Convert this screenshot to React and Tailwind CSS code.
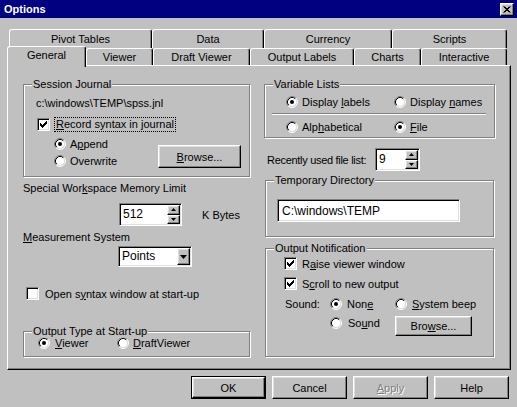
const raised =
  "bg-[#c0c0c0] border border-t-white border-l-white border-r-black border-b-black shadow-[inset_-1px_-1px_0_#808080,inset_1px_1px_0_#dfdfdf]";
const sunken =
  "bg-white border border-t-[#808080] border-l-[#808080] border-r-white border-b-white shadow-[inset_1px_1px_0_#000,inset_-1px_-1px_0_#dfdfdf]";

function Radio({ checked }) {
  return (
    <svg width="12" height="12" viewBox="0 0 12 12" className="shrink-0">
      <circle cx="6" cy="6" r="4.5" fill="#fff" />
      <path d="M2.11 9.89A5.5 5.5 0 0 1 9.89 2.11" fill="none" stroke="#808080" />
      <path d="M9.89 2.11A5.5 5.5 0 0 1 2.11 9.89" fill="none" stroke="#fff" />
      <path d="M2.82 9.18A4.5 4.5 0 0 1 9.18 2.82" fill="none" stroke="#000" />
      <path d="M9.18 2.82A4.5 4.5 0 0 1 2.82 9.18" fill="none" stroke="#dfdfdf" />
      {checked && <circle cx="6" cy="6" r="2" fill="#000" />}
    </svg>
  );
}

const tick = [
  [6, 0, 1], [5, 1, 2], [0, 2, 1], [4, 2, 3], [0, 3, 2], [3, 3, 3], [0, 4, 5], [1, 5, 3], [2, 6, 1],
];

function Check({ checked }) {
  return (
    <span className={`w-[13px] h-[13px] shrink-0 flex items-center justify-center ${sunken}`}>
      {checked && (
        <svg width="7" height="7" viewBox="0 0 7 7">
          {tick.map(([x, y, w], i) => (
            <rect key={i} x={x} y={y} width={w} height="1" fill="#000" />
          ))}
        </svg>
      )}
    </span>
  );
}

function Opt({ checked, children, className = "", gap = "gap-[4px]" }) {
  return (
    <div className={`flex items-center ${gap} ${className}`}>
      <Radio checked={checked} />
      <span>{children}</span>
    </div>
  );
}

function Btn({ className = "", children }) {
  return <div className={`flex items-center justify-center ${raised} ${className}`}>{children}</div>;
}

function Arrow({ up }) {
  return (
    <svg width="5" height="3" viewBox="0 0 5 3">
      <polygon points={up ? "2.5,0 5,3 0,3" : "0,0 5,0 2.5,3"} fill="#000" />
    </svg>
  );
}

function Spin({ value, className = "" }) {
  return (
    <div className={`flex p-[1px] ${sunken} ${className}`}>
      <span className="flex-1 pl-[2px] leading-[18px] text-[12px]">{value}</span>
      <div className="flex flex-col w-[13px]">
        <Btn className="flex-1">
          <Arrow up />
        </Btn>
        <Btn className="flex-1">
          <Arrow />
        </Btn>
      </div>
    </div>
  );
}

function Group({ title, className = "", children }) {
  return (
    <div className={`relative border border-[#808080] shadow-[1px_1px_0_#fff,inset_1px_1px_0_#fff] ${className}`}>
      <span className="absolute -top-[8px] left-[8px] bg-[#c0c0c0] px-[1px] leading-[14px]">{title}</span>
      {children}
    </div>
  );
}

function Tab({ w, children }) {
  return (
    <div
      className={`${w} h-full flex items-center justify-center border-t border-l border-r border-t-white border-l-white border-r-black rounded-t-[3px] shadow-[inset_-1px_0_0_#808080]`}
    >
      {children}
    </div>
  );
}

export default function App() {
  return (
    <div className="w-[517px] h-[407px] overflow-hidden bg-[#c0c0c0] text-black text-[11px] leading-[14px] font-['Liberation_Sans',Arial,sans-serif]">
      <div className="h-[18px] bg-[#000080] flex items-center justify-between pl-[4px] pr-[3px]">
        <span className="text-white font-bold text-[11px]">Options</span>
        <Btn className="w-[14px] h-[13px]">
          <svg width="8" height="7" viewBox="0 0 8 7">
            <path d="M0.5 0.5L6.5 6.5M1.5 0.5L7.5 6.5M6.5 0.5L0.5 6.5M7.5 0.5L1.5 6.5" stroke="#000" strokeWidth="1" />
          </svg>
        </Btn>
      </div>

      <div className="mt-[11px] h-[19px] flex pl-[9px]">
        <Tab w="w-[143px]">Pivot Tables</Tab>
        <Tab w="w-[112px]">Data</Tab>
        <Tab w="w-[128px]">Currency</Tab>
        <Tab w="w-[115px]">Scripts</Tab>
      </div>
      <div className="h-[17px] flex pl-[7px]">
        <div className="relative z-10 w-[79px] h-[21px] -mt-[2px] -mb-[2px] bg-[#c0c0c0] flex justify-center pt-[1px] border-t border-l border-r border-t-white border-l-white border-r-black rounded-t-[3px] shadow-[inset_-1px_0_0_#808080]">
          General
        </div>
        <Tab w="w-[67px]">Viewer</Tab>
        <Tab w="w-[97px]">Draft Viewer</Tab>
        <Tab w="w-[104px]">Output Labels</Tab>
        <Tab w="w-[67px]">Charts</Tab>
        <Tab w="w-[86px]">Interactive</Tab>
      </div>

      <div className="ml-[7px] w-[504px] h-[305px] border border-t-white border-l-white border-r-black border-b-black shadow-[inset_-1px_-1px_0_#808080] flex pl-[15px] pt-[18px]">
        {/* left column */}
        <div className="w-[228px] flex flex-col">
          <Group title="Session Journal" className="w-[227px] h-[93px] pl-[12px] pt-[11px]">
            <div className="h-[14px]">c:\windows\TEMP\spss.jnl</div>
            <div className="flex items-center h-[15px] mt-[7px] ml-[1px] gap-[4px]">
              <Check checked />
              <span className="border border-dotted border-black px-[1px] leading-[13px]">
                <u>R</u>ecord syntax in journal
              </span>
            </div>
            <div className="flex">
              <div className="flex flex-col ml-[18px] mt-[3px]">
                <Opt checked className="h-[17px]">
                  A<u>p</u>pend
                </Opt>
                <Opt className="h-[17px]">Overwrite</Opt>
              </div>
              <Btn className="ml-auto mr-[8px] mt-[13px] w-[83px] h-[23px]">
                <u>B</u>rowse...
              </Btn>
            </div>
          </Group>

          <div className="mt-[4px] h-[14px]">
            Special Wor<u>k</u>space Memory Limit
          </div>
          <div className="mt-[8px] flex items-center">
            <Spin value="512" className="ml-[96px] w-[63px] h-[23px]" />
            <span className="ml-[20px]">K Bytes</span>
          </div>
          <div className="mt-[4px] h-[14px]">
            <u>M</u>easurement System
          </div>
          <div className={`mt-[2px] ml-[95px] w-[74px] h-[21px] flex p-[1px] ${sunken}`}>
            <span className="flex-1 pl-[2px] leading-[17px] text-[12px]">Points</span>
            <Btn className="w-[13px]">
              <svg width="7" height="4" viewBox="0 0 7 4">
                <polygon points="0,0 7,0 3.5,4" fill="#000" />
              </svg>
            </Btn>
          </div>
          <div className="mt-[19px] h-[15px] flex items-center gap-[6px] pl-[3px]">
            <Check />
            <span>
              Open s<u>y</u>ntax window at start-up
            </span>
          </div>
          <Group title="Output Type at Start-up" className="mt-[30px] w-[227px] h-[26px] pt-[4px] pl-[14px]">
            <div className="flex items-center h-[14px]">
              <Opt checked gap="gap-[5px]" className="w-[79px]">
                <u>V</u>iewer
              </Opt>
              <Opt>
                <u>D</u>raftViewer
              </Opt>
            </div>
          </Group>
        </div>

        {/* right column */}
        <div className="ml-[13px] w-[232px] flex flex-col">
          <Group title="Variable Lists" className="w-[231px] h-[54px] pt-[9px]">
            <div className="flex h-[16px] items-center pl-[21px]">
              <Opt checked className="w-[108px]">
                Display <u>l</u>abels
              </Opt>
              <Opt>
                Display <u>n</u>ames
              </Opt>
            </div>
            <div className="mt-[3px] ml-[7px] w-[214px] border-t border-b border-t-[#808080] border-b-white" />
            <div className="mt-[4px] flex h-[16px] items-center pl-[21px]">
              <Opt className="w-[108px]">
                Alp<u>h</u>abetical
              </Opt>
              <Opt checked>
                <u>F</u>ile
              </Opt>
            </div>
          </Group>

          <div className="mt-[10px] h-[23px] flex items-center pl-[3px]">
            <span className="w-[108px] tracking-[-0.3px]">Recently used file list:</span>
            <Spin value="9" className="w-[45px] h-[23px]" />
          </div>

          <Group title="Temporary Directory" className="mt-[9px] ml-[1px] w-[229px] h-[57px] pt-[18px] pl-[11px]">
            <div className={`w-[183px] h-[23px] flex items-center pl-[4px] text-[12px] ${sunken}`}>C:\windows\TEMP</div>
          </Group>

          <Group title="Output Notification" className="mt-[11px] ml-[1px] w-[229px] h-[109px] pt-[7px]">
            <div className="flex items-center h-[15px] gap-[5px] pl-[18px]">
              <Check checked />
              <span>
                R<u>a</u>ise viewer window
              </span>
            </div>
            <div className="mt-[5px] flex items-center h-[15px] gap-[5px] pl-[18px]">
              <Check checked />
              <span>
                S<u>c</u>roll to new output
              </span>
            </div>
            <div className="mt-[5px] flex items-center h-[16px] pl-[19px]">
              <span className="w-[45px]">Sound:</span>
              <Opt checked gap="gap-[5px]" className="w-[65px]">
                Non<u>e</u>
              </Opt>
              <Opt gap="gap-[5px]">
                <u>S</u>ystem beep
              </Opt>
            </div>
            <div className="mt-[4px] flex items-start pl-[64px]">
              <Opt gap="gap-[6px]" className="w-[65px] h-[14px]">
                So<u>u</u>nd
              </Opt>
              <Btn className="w-[77px] h-[20px]">
                Bro<u>w</u>se...
              </Btn>
            </div>
          </Group>
        </div>
      </div>

      <div className="mt-[6px] flex justify-end gap-[6px] pr-[8px]">
        <div className="w-[75px] h-[23px] border border-black">
          <Btn className="w-full h-full">OK</Btn>
        </div>
        <Btn className="w-[75px] h-[23px]">Cancel</Btn>
        <Btn className="w-[75px] h-[23px] text-[#808080] [text-shadow:1px_1px_0_#fff]">
          <u>A</u>pply
        </Btn>
        <Btn className="w-[75px] h-[23px]">Help</Btn>
      </div>
    </div>
  );
}
